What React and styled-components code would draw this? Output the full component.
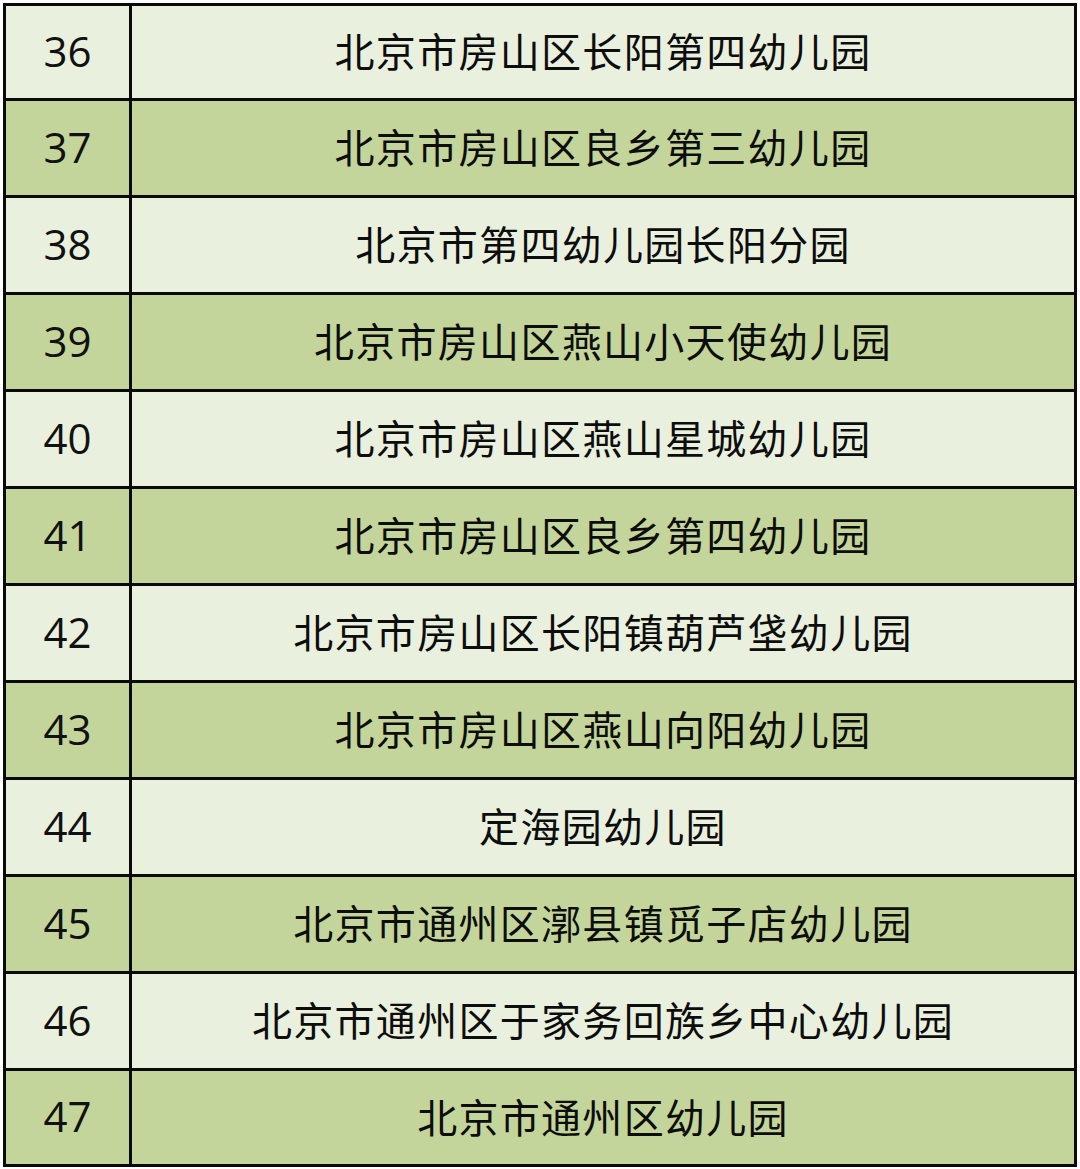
import React from 'react';
import styled, { createGlobalStyle } from 'styled-components';

const GlobalStyle = createGlobalStyle`
  html, body {
    margin: 0;
    padding: 0;
    background: #ffffff;
  }
  body {
    font-family: "Noto Sans CJK SC", "Noto Sans", sans-serif;
  }
`;

const rows = [
  [36, '北京市房山区长阳第四幼儿园'],
  [37, '北京市房山区良乡第三幼儿园'],
  [38, '北京市第四幼儿园长阳分园'],
  [39, '北京市房山区燕山小天使幼儿园'],
  [40, '北京市房山区燕山星城幼儿园'],
  [41, '北京市房山区良乡第四幼儿园'],
  [42, '北京市房山区长阳镇葫芦垡幼儿园'],
  [43, '北京市房山区燕山向阳幼儿园'],
  [44, '定海园幼儿园'],
  [45, '北京市通州区漷县镇觅子店幼儿园'],
  [46, '北京市通州区于家务回族乡中心幼儿园'],
  [47, '北京市通州区幼儿园'],
];

const Page = styled.div`
  padding: 3px;
  width: 1074px;
`;

const Table = styled.div`
  display: grid;
  grid-template-rows: 92px repeat(10, 97px) 96px;
  border: 3px solid #0a0a0a;
`;

const Row = styled.div`
  display: grid;
  grid-template-columns: 123px 1fr;
  background: ${p => (p.$dark ? '#c3d59a' : '#e9f0dd')};
  border-top: ${p => (p.$first ? 'none' : '3px solid #0a0a0a')};
`;

const NumCell = styled.div`
  display: flex;
  align-items: center;
  justify-content: center;
  font-family: "Open Sans", "Noto Sans", sans-serif;
  font-size: 42px;
  color: #111;
  padding-bottom: 4px;
`;

const NameCell = styled.div`
  display: flex;
  align-items: center;
  justify-content: center;
  border-left: 3px solid #0a0a0a;
  font-family: "Noto Sans CJK SC", sans-serif;
  font-size: 40px;
  letter-spacing: 1.3px;
  color: #0d0d0d;
  padding-bottom: 4px;
`;

export default function App() {
  return (
    <Page>
      <GlobalStyle />
      <Table>
        {rows.map(([n, name], i) => (
          <Row key={n} $dark={i % 2 === 1} $first={i === 0}>
            <NumCell>{n}</NumCell>
            <NameCell>{name}</NameCell>
          </Row>
        ))}
      </Table>
    </Page>
  );
}
